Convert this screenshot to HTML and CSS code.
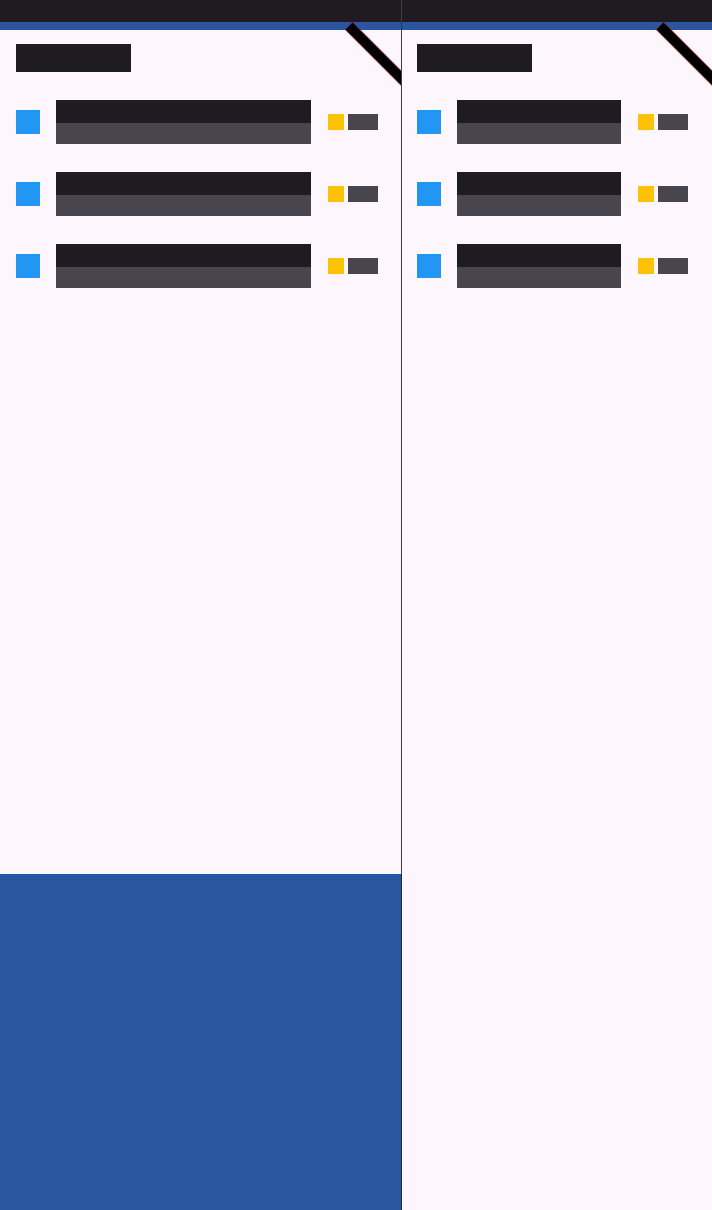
FILE: index.html
```html
<!DOCTYPE html>
<html lang="en">
<head>
<meta charset="utf-8">
<title>List panes</title>
<link rel="stylesheet" href="styles.css">
</head>
<body>
<div class="app">
  <section class="panel panel-left">
    <div class="statusbar"></div>
    <div class="screen">
      <div class="appbar"></div>
      <div class="content">
        <div class="page-title"></div>
        <ul class="list">
          <li class="row">
            <span class="lead-icon"></span>
            <div class="texts"><div class="line-title"></div><div class="line-sub"></div></div>
            <div class="trailing"><span class="star"></span><span class="count"></span></div>
          </li>
          <li class="row">
            <span class="lead-icon"></span>
            <div class="texts"><div class="line-title"></div><div class="line-sub"></div></div>
            <div class="trailing"><span class="star"></span><span class="count"></span></div>
          </li>
          <li class="row">
            <span class="lead-icon"></span>
            <div class="texts"><div class="line-title"></div><div class="line-sub"></div></div>
            <div class="trailing"><span class="star"></span><span class="count"></span></div>
          </li>
        </ul>
      </div>
      <div class="bottom-sheet"></div>
      <div class="banner"></div>
    </div>
  </section>
  <div class="divider"></div>
  <section class="panel panel-right">
    <div class="statusbar"></div>
    <div class="screen">
      <div class="appbar"></div>
      <div class="content">
        <div class="page-title"></div>
        <ul class="list">
          <li class="row">
            <span class="lead-icon"></span>
            <div class="texts"><div class="line-title"></div><div class="line-sub"></div></div>
            <div class="trailing"><span class="star"></span><span class="count"></span></div>
          </li>
          <li class="row">
            <span class="lead-icon"></span>
            <div class="texts"><div class="line-title"></div><div class="line-sub"></div></div>
            <div class="trailing"><span class="star"></span><span class="count"></span></div>
          </li>
          <li class="row">
            <span class="lead-icon"></span>
            <div class="texts"><div class="line-title"></div><div class="line-sub"></div></div>
            <div class="trailing"><span class="star"></span><span class="count"></span></div>
          </li>
        </ul>
      </div>
      <div class="banner"></div>
    </div>
  </section>
</div>
</body>
</html>
```
FILE: styles.css
```css
* { box-sizing: border-box; }
html, body {
  margin: 0;
  padding: 0;
  background: #fdf7fd;
  font-family: "Roboto", "Liberation Sans", sans-serif;
}
.app {
  display: flex;
  width: 712px;
  height: 1210px;
  overflow: hidden;
}
.panel {
  display: flex;
  flex-direction: column;
  height: 100%;
}
.panel-left { width: 401px; flex: none; }
.panel-right { flex: 1; min-width: 0; }
.divider {
  width: 1px;
  flex: none;
  background: linear-gradient(to bottom,
    #3f3d45 0, #3f3d45 22px,
    #2a3350 22px, #2a3350 30px,
    #3d3b42 30px, #3d3b42 874px,
    #1e2a45 874px, #1e2a45 100%);
}
.statusbar {
  height: 22px;
  flex: none;
  background: #1e1c21;
}
.screen {
  position: relative;
  flex: 1;
  display: flex;
  flex-direction: column;
  overflow: hidden;
  background: #fdf7fd;
}
.appbar {
  height: 8px;
  flex: none;
  background: #2b569f;
}
.content {
  padding-top: 14px;
}
.panel-left .content { padding-left: 16px; padding-right: 23px; }
.panel-right .content { padding-left: 15px; padding-right: 24px; }
.page-title {
  width: 115px;
  height: 28px;
  background: #1e1c21;
}
.list {
  list-style: none;
  margin: 28px 0 0;
  padding: 0;
  display: flex;
  flex-direction: column;
  gap: 28px;
}
.row {
  display: flex;
  align-items: center;
  height: 44px;
}
.lead-icon {
  width: 24px;
  height: 24px;
  flex: none;
  background: #2196f3;
  margin-right: 16px;
}
.texts {
  flex: 1;
  min-width: 0;
  display: flex;
  flex-direction: column;
}
.line-title {
  height: 23px;
  background: #1e1c21;
}
.line-sub {
  height: 21px;
  background: #49454f;
}
.trailing {
  flex: none;
  display: flex;
  gap: 4px;
  margin-left: 17px;
}
.star {
  width: 16px;
  height: 16px;
  background: #ffc107;
}
.count {
  width: 30px;
  height: 16px;
  background: #49454f;
}
.bottom-sheet {
  margin-top: auto;
  height: 336px;
  flex: none;
  background: #2b569f;
}
.banner {
  position: absolute;
  top: -1px;
  right: -48px;
  width: 100px;
  height: 10px;
  background: #000;
  box-shadow: 0 0 1px 0.5px rgba(183, 28, 28, 0.85);
  transform-origin: 0 50%;
  transform: rotate(45deg);
}
```
